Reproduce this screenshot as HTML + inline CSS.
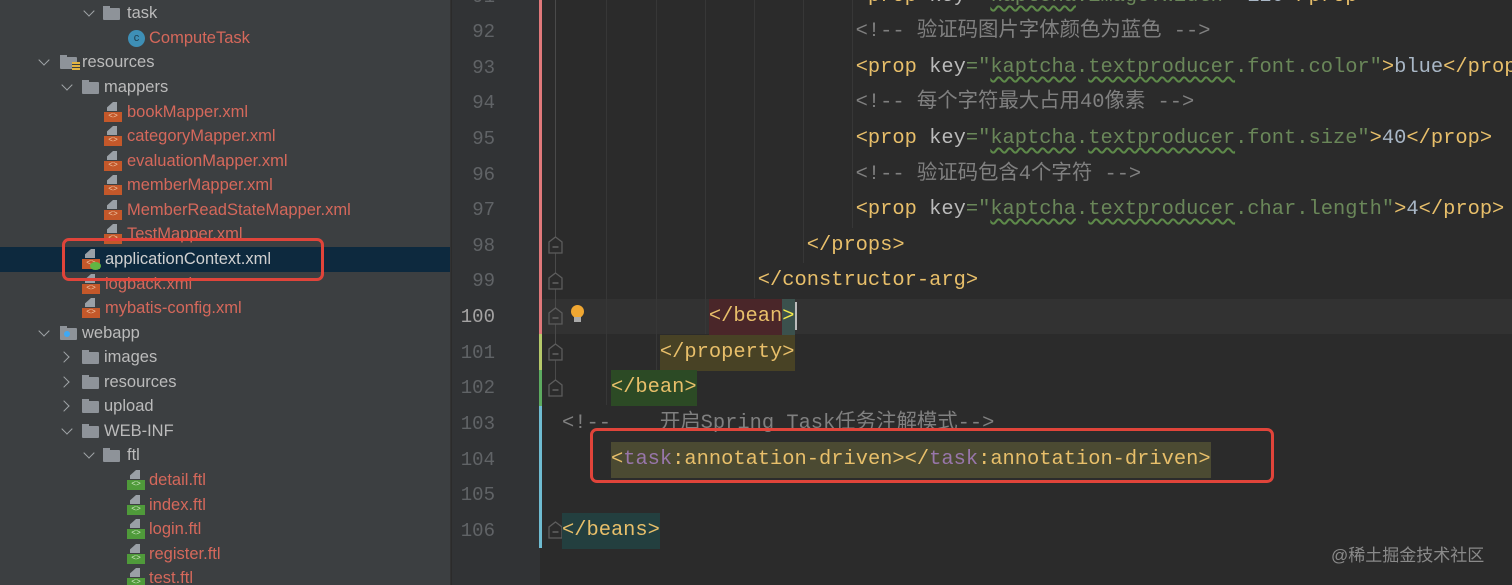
<!DOCTYPE html>
<html><head><meta charset="utf-8">
<style>
*{margin:0;padding:0;box-sizing:border-box}
body{width:1512px;height:585px;overflow:hidden;background:#2b2b2b;position:relative;font-family:"Liberation Sans","Noto Sans CJK SC",sans-serif}
#tree{position:absolute;left:0;top:0;width:451px;height:585px;background:#3c3f41;border-right:1px solid #323232;overflow:hidden}
.r{position:absolute;left:0;width:451px;height:25px;line-height:25px;font-size:16.5px;color:#bbbbbb;white-space:nowrap}
.r span{position:absolute;top:0}
.red{color:#d5685b}
.chev{width:8px;height:8px;border-right:1.6px solid #a0a4a8;border-bottom:1.6px solid #a0a4a8;margin-top:6px;transform:rotate(45deg)}
.chevr{width:8px;height:8px;border-right:1.6px solid #a0a4a8;border-bottom:1.6px solid #a0a4a8;margin-top:8px;transform:rotate(-45deg)}
.fold{width:17px;height:12px;background:#8e9399;margin-top:7px;border-radius:1px}
.fold:before{content:"";position:absolute;left:0;top:-2px;width:7px;height:3px;background:#8e9399}
.xi{width:18px;height:20px;margin-top:2px}
.xi:before{content:"";position:absolute;left:3px;top:0;width:10px;height:9px;background:#9aa0a6;clip-path:polygon(60% 0,100% 0,100% 100%,0 100%,0 60%)}
.xi:after{content:"<>";position:absolute;left:0;top:10px;width:18px;height:10px;background:#c4582a;color:#f0c9a8;font-size:8px;line-height:10px;text-align:center;font-family:"Liberation Mono",monospace}
.fi:after{background:#4f9a3a;color:#cfe8c2}
#gut{position:absolute;left:452px;top:0;width:88px;height:585px;background:#313335}
.ln{position:absolute;left:452px;width:43px;text-align:right;font-family:"Liberation Mono",monospace;font-size:19px;color:#606366;height:36px;line-height:36px}
.cl{position:absolute;left:562px;height:36px;line-height:36px;font-family:"Liberation Mono","Noto Sans CJK SC",monospace;font-size:20.4px;white-space:pre;color:#a9b7c6}
.t{color:#e8bf6a}.k{color:#bababa}.v{color:#6a8759}.c{color:#808080}.n{color:#9876aa}
.u{text-decoration:underline wavy #5e8a4a;text-underline-offset:4px}
.hl{display:inline-block;height:36px}
.guide{position:absolute;top:0;width:1px;background:#373737}
.fm{position:absolute;left:548px;width:15px;height:18px}
.box{position:absolute;border:3px solid #e0443a;border-radius:7px}
</style></head><body>
<div id="tree">
<div class="r" style="top:1px"><span class="chev" style="left:85px"></span><span class="fold" style="left:103px"></span><span style="left:127px">task</span></div>
<div class="r" style="top:26px"><span style="left:128px;top:4px;width:17px;height:17px;border-radius:50%;background:#3e8fb6;color:#1d3b4d;font-size:11px;line-height:17px;text-align:center">c</span><span class="red" style="left:149px">ComputeTask</span></div>
<div class="r" style="top:50px"><span class="chev" style="left:40px"></span><span class="fold" style="left:60px"></span><span style="left:72px;top:12px;width:8px;height:9px;background:repeating-linear-gradient(#e3b341 0 2px,#3c3f41 2px 3px)"></span><span style="left:82px">resources</span></div>
<div class="r" style="top:75px"><span class="chev" style="left:63px"></span><span class="fold" style="left:82px"></span><span style="left:104px">mappers</span></div>
<div class="r" style="top:100px"><span class="xi" style="left:104px"></span><span class="red" style="left:127px">bookMapper.xml</span></div>
<div class="r" style="top:124px"><span class="xi" style="left:104px"></span><span class="red" style="left:127px">categoryMapper.xml</span></div>
<div class="r" style="top:149px"><span class="xi" style="left:104px"></span><span class="red" style="left:127px">evaluationMapper.xml</span></div>
<div class="r" style="top:173px"><span class="xi" style="left:104px"></span><span class="red" style="left:127px">memberMapper.xml</span></div>
<div class="r" style="top:198px"><span class="xi" style="left:104px"></span><span class="red" style="left:127px">MemberReadStateMapper.xml</span></div>
<div class="r" style="top:222px"><span class="xi" style="left:104px"></span><span class="red" style="left:127px">TestMapper.xml</span></div>
<div class="r" style="top:247px;background:#0d293e"><span class="xi" style="left:82px"></span><span style="left:90px;top:15px;width:11px;height:8px;border-radius:50%;background:#62b543"></span><span style="left:105px;color:#d0d0d0">applicationContext.xml</span></div>
<div class="r" style="top:272px"><span class="xi" style="left:82px"></span><span class="red" style="left:105px">logback.xml</span></div>
<div class="r" style="top:296px"><span class="xi" style="left:82px"></span><span class="red" style="left:105px">mybatis-config.xml</span></div>
<div class="r" style="top:321px"><span class="chev" style="left:40px"></span><span class="fold" style="left:60px"></span><span style="left:64px;top:10px;width:6px;height:6px;border-radius:50%;background:#3fa9f5"></span><span style="left:82px">webapp</span></div>
<div class="r" style="top:345px"><span class="chevr" style="left:60px"></span><span class="fold" style="left:82px"></span><span style="left:104px">images</span></div>
<div class="r" style="top:370px"><span class="chevr" style="left:60px"></span><span class="fold" style="left:82px"></span><span style="left:104px">resources</span></div>
<div class="r" style="top:394px"><span class="chevr" style="left:60px"></span><span class="fold" style="left:82px"></span><span style="left:104px">upload</span></div>
<div class="r" style="top:419px"><span class="chev" style="left:63px"></span><span class="fold" style="left:82px"></span><span style="left:104px">WEB-INF</span></div>
<div class="r" style="top:443px"><span class="chev" style="left:85px"></span><span class="fold" style="left:103px"></span><span style="left:127px">ftl</span></div>
<div class="r" style="top:468px"><span class="xi fi" style="left:127px"></span><span class="red" style="left:149px">detail.ftl</span></div>
<div class="r" style="top:493px"><span class="xi fi" style="left:127px"></span><span class="red" style="left:149px">index.ftl</span></div>
<div class="r" style="top:517px"><span class="xi fi" style="left:127px"></span><span class="red" style="left:149px">login.ftl</span></div>
<div class="r" style="top:542px"><span class="xi fi" style="left:127px"></span><span class="red" style="left:149px">register.ftl</span></div>
<div class="r" style="top:566px"><span class="xi fi" style="left:127px"></span><span class="red" style="left:149px">test.ftl</span></div>
</div>
<div class="box" style="left:62px;top:238px;width:262px;height:43px"></div>

<div id="gut"></div>
<div style="position:absolute;left:540px;top:299px;width:972px;height:35px;background:#323232"></div>
<div style="position:absolute;left:539px;top:0;width:3px;height:334px;background:#e0787a"></div>
<div style="position:absolute;left:539px;top:334px;width:3px;height:36px;background:#b5c96a"></div>
<div style="position:absolute;left:539px;top:370px;width:3px;height:36px;background:#5dab60"></div>
<div style="position:absolute;left:539px;top:406px;width:3px;height:142px;background:#6fbcd1"></div>
<div style="position:absolute;left:555px;top:0;width:1px;height:390px;background:#4a4a4a"></div>
<div class="guide" style="left:606px;height:405px"></div>
<div class="guide" style="left:656px;height:370px"></div>
<div class="guide" style="left:705px;height:334px"></div>
<div class="guide" style="left:754px;height:298px"></div>
<div class="guide" style="left:803px;height:263px"></div>
<div class="guide" style="left:852px;height:228px"></div>
<svg class="fm" style="top:236px" viewBox="0 0 15 18"><path d="M7.5 1L14 6V17H1V6Z" fill="#2b2b2b" stroke="#5c5c5c" stroke-width="1.3"/><path d="M4.5 11H10.5" stroke="#6a6a6a" stroke-width="1.3"/></svg>
<svg class="fm" style="top:272px" viewBox="0 0 15 18"><path d="M7.5 1L14 6V17H1V6Z" fill="#2b2b2b" stroke="#5c5c5c" stroke-width="1.3"/><path d="M4.5 11H10.5" stroke="#6a6a6a" stroke-width="1.3"/></svg>
<svg class="fm" style="top:307px" viewBox="0 0 15 18"><path d="M7.5 1L14 6V17H1V6Z" fill="#323232" stroke="#5c5c5c" stroke-width="1.3"/><path d="M4.5 11H10.5" stroke="#6a6a6a" stroke-width="1.3"/></svg>
<svg class="fm" style="top:343px" viewBox="0 0 15 18"><path d="M7.5 1L14 6V17H1V6Z" fill="#2b2b2b" stroke="#5c5c5c" stroke-width="1.3"/><path d="M4.5 11H10.5" stroke="#6a6a6a" stroke-width="1.3"/></svg>
<svg class="fm" style="top:379px" viewBox="0 0 15 18"><path d="M7.5 1L14 6V17H1V6Z" fill="#2b2b2b" stroke="#5c5c5c" stroke-width="1.3"/><path d="M4.5 11H10.5" stroke="#6a6a6a" stroke-width="1.3"/></svg>
<svg class="fm" style="top:521px" viewBox="0 0 15 18"><path d="M7.5 1L14 6V17H1V6Z" fill="#2b2b2b" stroke="#5c5c5c" stroke-width="1.3"/><path d="M4.5 11H10.5" stroke="#6a6a6a" stroke-width="1.3"/></svg>
<div style="position:absolute;left:571px;top:305px;width:13px;height:13px;border-radius:50%;background:#f0a732"></div>
<div style="position:absolute;left:574px;top:317px;width:7px;height:5px;background:#aaa"></div>

<div class="ln" style="top:-21px">91</div>
<div class="ln" style="top:14px">92</div>
<div class="ln" style="top:50px">93</div>
<div class="ln" style="top:85px">94</div>
<div class="ln" style="top:121px">95</div>
<div class="ln" style="top:157px">96</div>
<div class="ln" style="top:192px">97</div>
<div class="ln" style="top:228px">98</div>
<div class="ln" style="top:263px">99</div>
<div class="ln" style="top:299px;color:#a4a3a3">100</div>
<div class="ln" style="top:335px">101</div>
<div class="ln" style="top:370px">102</div>
<div class="ln" style="top:406px">103</div>
<div class="ln" style="top:442px">104</div>
<div class="ln" style="top:477px">105</div>
<div class="ln" style="top:513px">106</div>

<div class="cl" style="top:-21px">                        <span class="t">&lt;prop </span><span class="k">key</span><span class="v">="<span class="u">kaptcha</span>.image.width"</span><span class="t">&gt;</span>120<span class="t">&lt;/prop&gt;</span></div>
<div class="cl" style="top:14px"><span class="c">                        &lt;!-- 验证码图片字体颜色为蓝色 --&gt;</span></div>
<div class="cl" style="top:50px">                        <span class="t">&lt;prop </span><span class="k">key</span><span class="v">="<span class="u">kaptcha</span>.<span class="u">textproducer</span>.font.color"</span><span class="t">&gt;</span>blue<span class="t">&lt;/prop&gt;</span></div>
<div class="cl" style="top:85px"><span class="c">                        &lt;!-- 每个字符最大占用40像素 --&gt;</span></div>
<div class="cl" style="top:121px">                        <span class="t">&lt;prop </span><span class="k">key</span><span class="v">="<span class="u">kaptcha</span>.<span class="u">textproducer</span>.font.size"</span><span class="t">&gt;</span>40<span class="t">&lt;/prop&gt;</span></div>
<div class="cl" style="top:157px"><span class="c">                        &lt;!-- 验证码包含4个字符 --&gt;</span></div>
<div class="cl" style="top:192px">                        <span class="t">&lt;prop </span><span class="k">key</span><span class="v">="<span class="u">kaptcha</span>.<span class="u">textproducer</span>.char.length"</span><span class="t">&gt;</span>4<span class="t">&lt;/prop&gt;</span></div>
<div class="cl" style="top:228px">                    <span class="t">&lt;/props&gt;</span></div>
<div class="cl" style="top:263px">                <span class="t">&lt;/constructor-arg&gt;</span></div>
<div class="cl" style="top:299px">            <span class="hl t" style="background:#4a2629">&lt;/bean</span><span class="hl" style="background:#3b514d;color:#f5e94a">&gt;</span><span style="display:inline-block;width:2px;height:28px;background:#bbb;vertical-align:middle"></span></div>
<div class="cl" style="top:335px">        <span class="hl t" style="background:#484225">&lt;/property&gt;</span></div>
<div class="cl" style="top:370px">    <span class="hl t" style="background:#2c4a25">&lt;/bean&gt;</span></div>
<div class="cl" style="top:406px"><span class="c">&lt;!--    开启Spring Task任务注解模式--&gt;</span></div>
<div class="cl" style="top:442px">    <span class="hl t" style="background:#4b4a32">&lt;<span class="n">task</span>:annotation-driven&gt;&lt;/<span class="n">task</span>:annotation-driven&gt;</span></div>
<div class="cl" style="top:513px"><span class="hl t" style="background:#233f3f">&lt;/beans&gt;</span></div>

<div class="box" style="left:590px;top:428px;width:684px;height:55px"></div>
<div style="position:absolute;left:1331px;top:541px;font-size:17px;color:#8a8a8a;font-family:'Liberation Sans','Noto Sans CJK SC',sans-serif">@稀土掘金技术社区</div>
</body></html>
